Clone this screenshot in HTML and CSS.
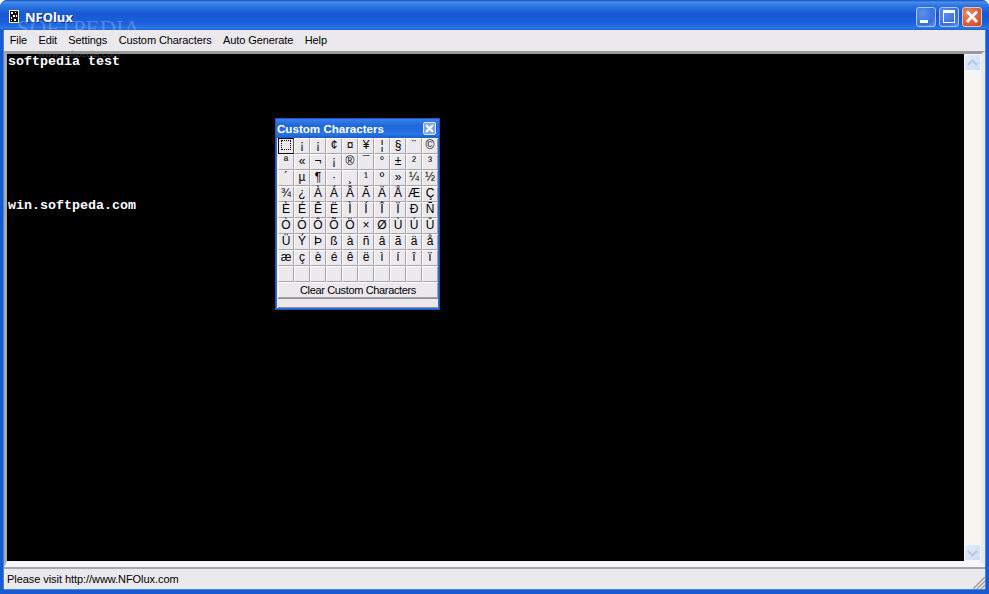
FILE: index.html
```html
<!DOCTYPE html>
<html lang="en">
<head>
<meta charset="utf-8">
<title>NFOlux</title>
<link rel="stylesheet" href="styles.css">
</head>
<body>
<div class="window">
  <header class="titlebar">
    <svg class="app-icon" width="10" height="13" viewBox="0 0 10 13"><rect width="10" height="13" fill="#fff"/><rect x="1" y="1" width="8" height="11" fill="#111"/><path d="M2 2h2v2H2zM6 2h1v1H6zM4 5h2v2H4zM7 5h1v2H7zM2 7h1v2H2zM5 9h2v2H5zM2 10h1v1H2z" fill="#fff"/></svg>
    <span class="app-title">NFOlux</span>
    <div class="caption-buttons">
      <div class="cap cap-blue"><svg width="20" height="20" viewBox="0 0 20 20"><rect x="4" y="13" width="8" height="3" fill="#fff"/></svg></div>
      <div class="cap cap-blue"><svg width="20" height="20" viewBox="0 0 20 20"><path d="M4 3h12v13H4z M5 6v9h10V6z" fill="#fff" fill-rule="evenodd"/></svg></div>
      <div class="cap cap-red"><svg width="20" height="20" viewBox="0 0 20 20"><path d="M5 4.500l10 10.500M15 4.500L5 15" stroke="#fff" stroke-width="2.800"/></svg></div>
    </div>
  </header>
  <div class="body">
    <nav class="menubar">
      <span>File</span><span>Edit</span><span>Settings</span><span>Custom Characters</span><span>Auto Generate</span><span>Help</span>
    </nav>
    <div class="editor">
      <div class="canvas">
        <pre class="nfo">softpedia test








win.softpeda.com</pre>
      </div>
      <div class="scrollbar">
        <div class="sb-btn"><svg width="11" height="8" viewBox="0 0 11 8"><path d="M1 6l4.500-4.500L10 6" fill="none" stroke="#b4c6e4" stroke-width="2"/></svg></div>
        <div class="sb-btn"><svg width="11" height="8" viewBox="0 0 11 8"><path d="M1 2l4.500 4.500L10 2" fill="none" stroke="#b4c6e4" stroke-width="2"/></svg></div>
      </div>
    </div>
    <footer class="statusbar">
      <span>Please visit http://www.NFOlux.com</span>
      <svg class="grip" width="12" height="12" viewBox="0 0 12 12"><path d="M12 0L0 12M12 4L4 12M12 8L8 12" stroke="#a5a196" stroke-width="1.500"/></svg>
    </footer>
  </div>
</div>

<div class="watermark"><span class="wm-big">SOFTPEDIA</span><span class="wm-small">www.softpedia.com</span></div>

<section class="palette">
  <div class="pal-title"><span>Custom Characters</span><div class="pal-close"><svg width="9" height="9" viewBox="0 0 9 9"><path d="M1 1l7 7M8 1L1 8" stroke="#fff" stroke-width="2"/></svg></div></div>
  <div class="pal-grid">
    <button class="key key-focus"><i></i></button><button class="key">¡</button><button class="key">¡</button><button class="key">¢</button><button class="key">¤</button><button class="key">¥</button><button class="key">¦</button><button class="key">§</button><button class="key">¨</button><button class="key">©</button>
    <button class="key">ª</button><button class="key">«</button><button class="key">¬</button><button class="key">¡</button><button class="key">®</button><button class="key">¯</button><button class="key">°</button><button class="key">±</button><button class="key">²</button><button class="key">³</button>
    <button class="key">´</button><button class="key">µ</button><button class="key">¶</button><button class="key">·</button><button class="key">¸</button><button class="key">¹</button><button class="key">º</button><button class="key">»</button><button class="key">¼</button><button class="key">½</button>
    <button class="key">¾</button><button class="key">¿</button><button class="key">À</button><button class="key">Á</button><button class="key">Â</button><button class="key">Ã</button><button class="key">Ä</button><button class="key">Å</button><button class="key">Æ</button><button class="key">Ç</button>
    <button class="key">È</button><button class="key">É</button><button class="key">Ê</button><button class="key">Ë</button><button class="key">Ì</button><button class="key">Í</button><button class="key">Î</button><button class="key">Ï</button><button class="key">Ð</button><button class="key">Ñ</button>
    <button class="key">Ò</button><button class="key">Ó</button><button class="key">Ô</button><button class="key">Õ</button><button class="key">Ö</button><button class="key">×</button><button class="key">Ø</button><button class="key">Ù</button><button class="key">Ú</button><button class="key">Û</button>
    <button class="key">Ü</button><button class="key">Ý</button><button class="key">Þ</button><button class="key">ß</button><button class="key">à</button><button class="key">ñ</button><button class="key">â</button><button class="key">ã</button><button class="key">ä</button><button class="key">å</button>
    <button class="key">æ</button><button class="key">ç</button><button class="key">è</button><button class="key">é</button><button class="key">ê</button><button class="key">ë</button><button class="key">ì</button><button class="key">í</button><button class="key">î</button><button class="key">ï</button>
    <button class="key"></button><button class="key"></button><button class="key"></button><button class="key"></button><button class="key"></button><button class="key"></button><button class="key"></button><button class="key"></button><button class="key"></button><button class="key"></button>
  </div>
  <button class="clear-btn">Clear Custom Characters</button>
  <div class="pal-status"></div>
</section>
</body>
</html>
```
FILE: styles.css
```css
* { box-sizing: border-box; }
html, body { margin: 0; padding: 0; width: 989px; height: 594px; overflow: hidden; background: #fff; }
body { font-family: "Liberation Sans", Arial, sans-serif; font-size: 11px; color: #000; position: relative; }

.window {
  width: 989px; height: 594px; display: flex; flex-direction: column;
  background: #1a5ad0; border-radius: 7px 7px 0 0; overflow: hidden;
}
.titlebar {
  height: 30px; flex: none; display: flex; align-items: center; padding: 3px 7px 0 9px;
  background: linear-gradient(180deg, #0e50c6 0, #4a8ee8 2px, #2b74e0 6px, #1658d4 14px, #1b62dc 24px, #2e78e8 28px, #1d60d0 30px);
}
.app-icon { flex: none; }
.app-title { margin-left: 6px; color: #fff; font: 700 13px "Noto Sans", "Liberation Sans", sans-serif; text-shadow: 1px 1px 0 #0f2a8a; }
.caption-buttons { margin-left: auto; display: flex; gap: 3px; align-self: flex-start; margin-top: 4px; }
.cap { width: 20px; height: 20px; border: 1px solid #fff; border-radius: 3px; display: flex; }
.cap svg { margin: -1px; flex: none; }
.cap-blue { background: radial-gradient(circle at 30% 30%, #5a90ec, #3a70dc 65%, #6c98ec); border-color: #a9c2f0; }
.cap-red { background: radial-gradient(circle at 30% 30%, #e88a64, #dc5c34 60%, #c8481e); border-color: #ecc4b4; }

.body {
  flex: 1; min-height: 0; margin: 0 4px 5px; display: flex; flex-direction: column;
  background: #ebe8ee; box-shadow: 1px 0 0 #3f86ea, -1px 0 0 #3f86ea, 0 1px 0 #3f86ea;
}
.menubar {
  height: 21px; flex: none; display: flex; align-items: center; padding: 0 0 2px 0;
  background: #ebe8ee;
}
.menubar span { padding: 0 5.700px; font-size: 11px; letter-spacing: -.1px; line-height: 18px; white-space: nowrap; }

.editor {
  flex: 1; min-height: 0; display: flex; border-style: solid; border-width: 3px 4px 6px 3px;
  border-color: #9a9a9a #ebe8ee #f6f5f8 #a8a8a8;
}
.canvas { flex: 1; background: #000; padding: 0 0 0 1px; min-width: 0; }
.nfo { margin: 0; color: #fff; font: 700 13.330px/16px "Liberation Mono", "Courier New", monospace; }
.scrollbar {
  width: 17px; flex: none; background: #f6f5f2; display: flex; flex-direction: column; justify-content: space-between;
}
.sb-btn {
  width: 17px; height: 17px; background: linear-gradient(135deg, #e4edfb, #cddbf5); border: 1px solid #f2f6fe;
  border-radius: 2px; display: flex; align-items: center; justify-content: center;
}

.statusbar {
  height: 22px; flex: none; display: flex; align-items: center; justify-content: space-between;
  padding: 0 0 0 3px; background: #ebe8ee; border-top: 2px solid #a8a6a6; letter-spacing: -.06px;
}
.grip { align-self: flex-end; }

.watermark { position: absolute; left: 17px; top: 20px; width: 125px; color: rgba(205, 218, 238, .3); pointer-events: none; }
.wm-big { display: block; font: 400 23px/18px "Liberation Serif", serif; letter-spacing: -.1px; }
.wm-small { display: block; font: 400 9.500px/10px "Liberation Sans", sans-serif; margin-left: 21px; margin-top: 11px; color: rgba(130, 130, 130, .45); }

.palette {
  position: absolute; left: 275px; top: 118px; width: 165px; height: 192px;
  background: #ebe8ee; border: 2px solid #2b70dc; border-top: 0; display: flex; flex-direction: column;
  outline: 1px solid #1a56c8; outline-offset: -1px;
}
.pal-title {
  height: 20px; flex: none; display: flex; align-items: center; justify-content: space-between; padding: 1px 3px 0 1px; margin: 0 -1px;
  background: linear-gradient(180deg, #3f86e8 0, #1e66dc 8px, #2a74e4 16px, #1a5cd0 20px); color: #fff; font-weight: 700; font-size: 11.600px;
}
.pal-close { width: 13px; height: 13px; background: #7fa6ea; border: 1px solid #dfe8fa; border-radius: 2px; display: flex; align-items: center; justify-content: center; }
.pal-grid { display: grid; grid-template-columns: repeat(10, 16px); grid-auto-rows: 16px; margin-left: 1px; }
.key {
  width: 16px; height: 16px; padding: 0 0 2px; margin: 0; font: 400 12px/13px "Liberation Sans", sans-serif; color: #000;
  background: #ebe8ee; border: 1px solid; border-color: #fff #a5a3a6 #a5a3a6 #fff; display: flex; align-items: center; justify-content: center;
}
.key-focus { border: 1px solid #000; border-right-color: #555; }
.key-focus i { display: block; width: 10px; height: 10px; border: 1px dotted #000; }
.clear-btn {
  height: 16px; flex: none; margin: 0 0 0 1px; padding: 0; width: 160px; font: 400 11px/14px "Liberation Sans", sans-serif; letter-spacing: -.35px; color: #000;
  background: #ebe8ee; border: 1px solid; border-color: #fff #a5a3a6 #a5a3a6 #fff;
}
.pal-status { flex: 1; margin: 0 0 0 1px; border-top: 1px solid #8f8f8f; border-bottom: 1px solid #8f8f8f; height: 10px; }
```
